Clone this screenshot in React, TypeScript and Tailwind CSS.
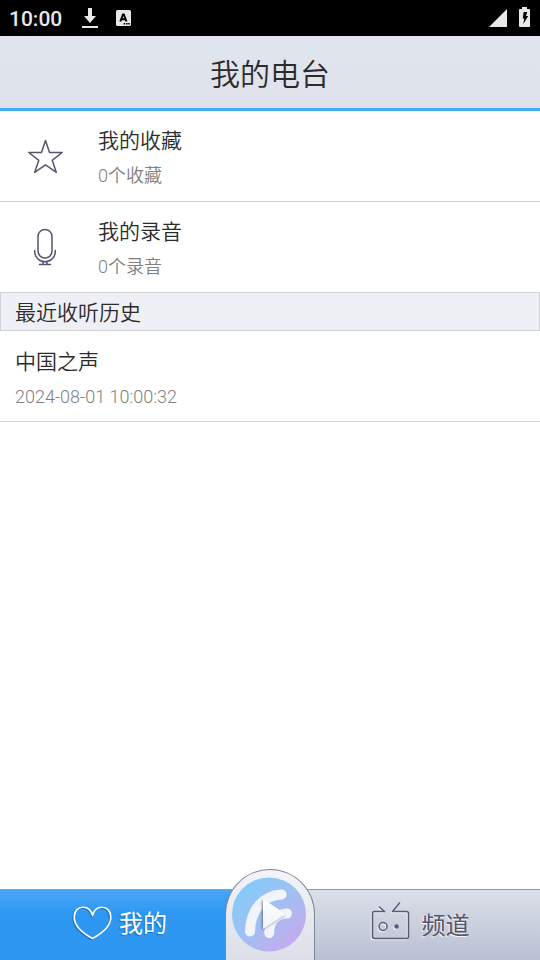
import React from "react";

function StatusBar() {
  return (
    <div className="flex h-9 items-center justify-between bg-black pr-2.5 pl-[9px] text-[#e8e8e8]">
      <div className="flex items-center">
        <span className="w-[73px] pt-0.5 text-[21px] leading-[34px] font-medium">10:00</span>
        <svg width="16" height="20" viewBox="0 0 16 20" fill="currentColor" aria-hidden="true">
          <path d="M6 0h4v8h4l-6 7-6-7h4zM0 18h16v2H0z" />
        </svg>
        <svg className="ml-[18px]" width="15" height="16" viewBox="0 0 15 16" aria-hidden="true">
          <rect width="15" height="16" rx="1.5" fill="currentColor" />
          <path d="M4.3 11.5 7 4.5h.8l2.7 7M5.4 9.3h4" fill="none" stroke="#000" strokeWidth="2" />
          <path d="M7.6 13h1.6v1.6H7.6zM10 13h1.6v1.6H10zM12.2 13h1.6v1.6h-1.6z" fill="#000" />
        </svg>
      </div>
      <div className="flex items-center gap-3">
        <svg width="18" height="18" viewBox="0 0 18 18" fill="currentColor" aria-hidden="true">
          <path d="M18 0v18H0z" />
        </svg>
        <svg className="-mt-0.5" width="11" height="20" viewBox="0 0 11 20" aria-hidden="true">
          <path d="M3 0h5v2h2q1 0 1 1v16q0 1-1 1H1q-1 0-1-1V3q0-1 1-1h2z" fill="currentColor" />
          <path d="M4.6 5h3.6L7 9h2.2l-4.8 8 .8-5.6H3.8z" fill="#000" />
        </svg>
      </div>
    </div>
  );
}

function StarIcon() {
  return (
    <svg width="36" height="36" viewBox="0 0 36 36" fill="none" stroke="#55556f" strokeWidth="1.5" strokeLinejoin="round" aria-hidden="true">
      <path d="M17.500 1.500 21.500 13.500H34.200L24.200 21.300 28.300 33.300 17.500 25.800 6.700 33.300 10.800 21.300.8 13.500H13.500z" />
    </svg>
  );
}

function MicIcon() {
  return (
    <svg width="36" height="40" viewBox="0 0 36 40" fill="none" stroke="#55556f" strokeWidth="1.5" strokeLinecap="round" aria-hidden="true">
      <rect x="10" y="1.5" width="14" height="28.500" rx="7" />
      <path d="M6.700 22.500v1a10.300 10.300 0 0 0 20.600 0v-1M15 33.800v2.200M19 33.800v2.200M11.500 36.500h11" />
    </svg>
  );
}

function LibraryRow({ icon, title, detail }: { icon: React.ReactNode; title: string; detail: string }) {
  return (
    <button type="button" className="flex w-full items-center pt-[13px] pb-[7px] pl-7 text-left">
      <span className="-mt-1 flex w-[70px] shrink-0">{icon}</span>
      <span className="flex flex-col">
        <span className="text-[21px] leading-[34px] text-[#2b2b2b]">{title}</span>
        <span className="text-[18px] leading-9 text-[#808080]">{detail}</span>
      </span>
    </button>
  );
}

function HeartIcon() {
  return (
    <svg className="drop-shadow-[-1px_1px_0px_#1c6fb8]" width="39" height="34" viewBox="0 0 39 34" fill="none" stroke="#fff" strokeWidth="1.6" strokeLinejoin="round" aria-hidden="true">
      <path d="M19.5 32.5C13 29 1.2 21 1.2 11 1.2 5 5 1.2 10 1.2c4.600 0 8.300 3.200 9.500 8.300C20.700 4.400 24.400 1.200 29 1.200c5 0 8.800 3.800 8.800 9.800 0 10-11.800 18-18.300 21.500z" />
    </svg>
  );
}

function RadioIcon() {
  return (
    <svg className="-mt-2 drop-shadow-[-1px_1px_0px_#f4f5fa]" width="39" height="38" viewBox="0 0 39 38" fill="none" stroke="#5a5a72" strokeWidth="1.500" strokeLinecap="round" strokeLinejoin="round" aria-hidden="true">
      <path d="M13.500 9.500H3.500Q1.500 9.500 1.500 11.500v23q0 2 2 2h32q2 0 2-2v-23q0-2-2-2H21.500L28.500 1M8.500 5l5 4.500" />
      <circle cx="12" cy="24.500" r="4" />
      <circle cx="25.500" cy="24.500" r="1.500" fill="#5a5a72" />
    </svg>
  );
}

function PlayTab() {
  return (
    <button
      type="button"
      aria-label="播放"
      className="absolute bottom-0 left-1/2 flex h-[91px] w-[90px] -translate-x-1/2 justify-center rounded-t-full border border-b-0 border-[#7d8795] bg-linear-to-b from-[#f3f4f8] to-[#dcdfe9] pt-[7px] pr-0.5"
    >
      <svg width="74" height="75" viewBox="0 0 74 75" aria-hidden="true">
        <defs>
          <linearGradient id="disc" x1="0.15" y1="0.1" x2="0.85" y2="0.9">
            <stop offset="0" stopColor="#84cbf9" />
            <stop offset="0.5" stopColor="#a1bff2" />
            <stop offset="1" stopColor="#c6a9ef" />
          </linearGradient>
          <linearGradient id="arrow" x1="0" y1="0" x2="0" y2="1">
            <stop offset="0" stopColor="#fff" />
            <stop offset="1" stopColor="#f1f2f6" />
          </linearGradient>
          <filter id="lift" x="-30%" y="-30%" width="160%" height="160%">
            <feDropShadow dx="-1" dy="1" stdDeviation="1" floodColor="#4a5570" floodOpacity="0.7" />
          </filter>
        </defs>
        <circle cx="37" cy="37.500" r="37" fill="url(#disc)" />
        <path d="M18 54.500C18.500 33 31 18.500 49.700 17.500M37.300 56C37 44.500 43 37 55 36.500" fill="none" stroke="#f1f4fa" strokeWidth="10" strokeLinecap="round" />
        <path d="M31 22v30l23-15z" fill="url(#arrow)" filter="url(#lift)" />
      </svg>
    </button>
  );
}

function BottomNav() {
  return (
    <nav className="relative flex h-[71px] border-t border-[#929bab]">
      <button
        type="button"
        aria-current="page"
        className="flex flex-1 items-center justify-center gap-[7px] bg-linear-to-b from-[#48a5f6] to-[#2d97f2] to-35% pr-8 pb-1"
      >
        <HeartIcon />
        <span className="pt-0.5 text-[24px] leading-8 font-normal text-white [text-shadow:-1px_1px_1px_#1c6fb8]">我的</span>
      </button>
      <button
        type="button"
        className="flex flex-1 items-center justify-center gap-3 bg-linear-to-b from-[#dcdfe9] to-[#b9c0d3] pl-7"
      >
        <RadioIcon />
        <span className="pt-0.5 text-[24px] leading-8 font-normal text-[#55556c] [text-shadow:-1px_1px_0px_#f4f5fa]">频道</span>
      </button>
      <PlayTab />
    </nav>
  );
}

export default function App() {
  return (
    <div className="flex min-h-screen flex-col bg-white font-[Roboto,'Noto_Sans_CJK_SC',sans-serif]">
      <StatusBar />
      <header className="border-b-[3px] border-[#42aefb] bg-linear-to-b from-[#e1e5ee] to-[#dfe2eb] pt-1.5">
        <h1 className="text-center text-[30px] leading-[66px] font-[350] text-[#2b2b2b]">我的电台</h1>
      </header>
      <main className="flex-1 font-[350]">
        <div className="border-b border-[#d3d5da]">
          <LibraryRow icon={<StarIcon />} title="我的收藏" detail="0个收藏" />
        </div>
        <LibraryRow icon={<MicIcon />} title="我的录音" detail="0个录音" />
        <h2 className="border border-[#d0d2d8] bg-[#eff0f5] pt-[3px] pl-3.5 text-[21px] leading-[34px] font-[350] text-[#2b2b2b]">最近收听历史</h2>
        <button type="button" className="flex w-full flex-col border-b border-[#d3d5da] pt-3.5 pb-1.5 pl-[15px] text-left">
          <span className="text-[21px] leading-[34px] text-[#2b2b2b]">中国之声</span>
          <span className="text-[18px] leading-9 text-[#808080]">2024-08-01 10:00:32</span>
        </button>
      </main>
      <BottomNav />
    </div>
  );
}
